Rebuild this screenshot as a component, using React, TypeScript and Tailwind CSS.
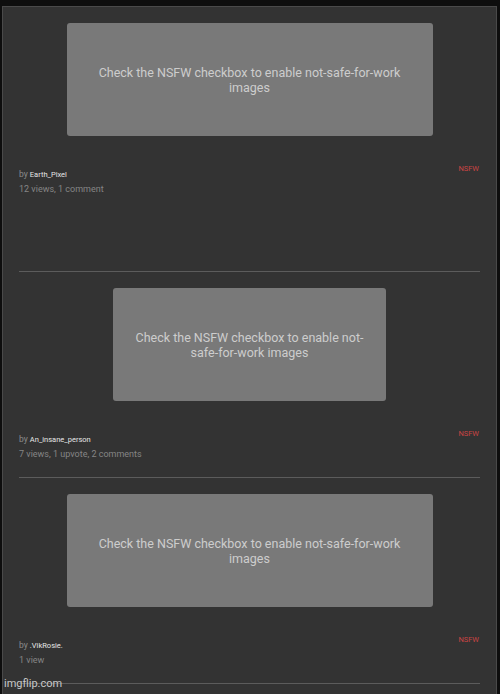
const posts = [
  { user: "Earth_Pixel", stats: "12 views, 1 comment", wide: true, tall: true },
  { user: "An_insane_person", stats: "7 views, 1 upvote, 2 comments", wide: false, tall: false },
  { user: ".VikRosie.", stats: "1 view", wide: true, tall: false },
];

function Post({ user, stats, wide, tall }: { user: string; stats: string; wide: boolean; tall: boolean }) {
  return (
    <div className={tall ? "h-[264px] pt-4" : "pt-4 pb-4"}>
      <div
        className={`mx-auto flex h-[113px] items-center justify-center rounded-[3px] bg-[#797979] ${
          wide ? "w-[366px] px-[28px]" : "w-[273px] px-[20px]"
        }`}
      >
        <p className="text-center text-[12.5px] leading-[15px] text-[#cdcdcd]">
          Check the NSFW checkbox to enable not-safe-for-work images
        </p>
      </div>
      <div className="mt-[28px] flex items-start justify-between">
        <div className="pt-[3px]">
          <div className="text-[8.5px] leading-[14px] text-[#8c8c8c]">
            by <span className="text-[7.5px] text-[#e6e6e6]">{user}</span>
          </div>
          <div className="text-[9px] leading-[14px] text-[#858585]">{stats}</div>
        </div>
        <span className="pr-[1px] text-[7.5px] leading-[10px] text-[#c94444]">NSFW</span>
      </div>
    </div>
  );
}

export default function App() {
  return (
    <div className="relative h-[694px] overflow-hidden bg-[#0e0e0e] pt-[6px] pl-[2px] font-['Roboto',sans-serif]">
      <div className="h-[800px] w-[495px] border border-[#4a4a4a] bg-[#333333] px-4">
        {posts.map((p) => (
          <div key={p.user}>
            <Post {...p} />
            <div className="h-px bg-[#5c5c5c]" />
          </div>
        ))}
      </div>
      <span className="absolute left-[4px] top-[677px] text-[11px] leading-[14px] text-[#c9c9c9]">imgflip.com</span>
    </div>
  );
}
